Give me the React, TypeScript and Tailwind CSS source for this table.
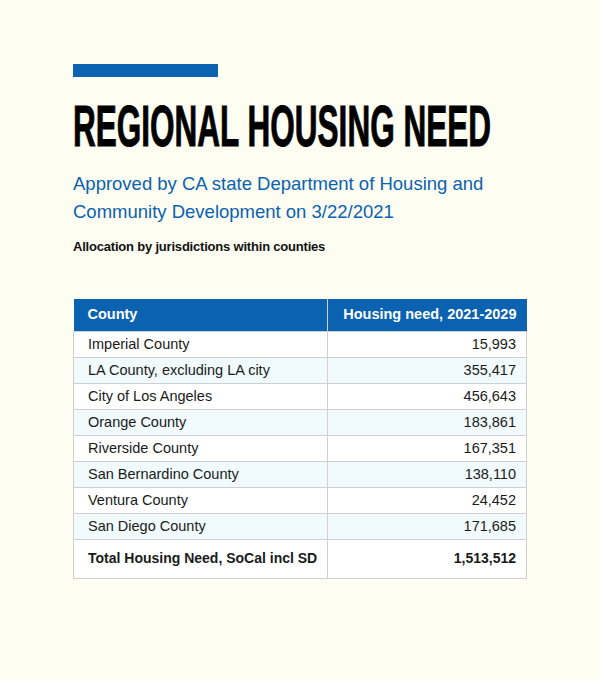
const rows = [
  ["Imperial County", "15,993"],
  ["LA County, excluding LA city", "355,417"],
  ["City of Los Angeles", "456,643"],
  ["Orange County", "183,861"],
  ["Riverside County", "167,351"],
  ["San Bernardino County", "138,110"],
  ["Ventura County", "24,452"],
  ["San Diego County", "171,685"],
];

export default function App() {
  return (
    <div className="w-[600px] h-[680px] bg-[#fdfdf1] px-[73px] pt-[64px] font-['Liberation_Sans',Arial,sans-serif]">
      <div className="w-[145px] h-[13px] bg-[#0a62b0]" />
      <h1 className="mt-[21px] h-[56px] text-[57px] leading-[56px] font-bold text-black whitespace-nowrap origin-left scale-x-[0.553] [-webkit-text-stroke:1px_black]">
        REGIONAL HOUSING NEED
      </h1>
      <p className="mt-[16px] text-[18.5px] leading-[28px] text-[#0a62b0]">
        Approved by CA state Department of Housing and Community Development on 3/22/2021
      </p>
      <p className="mt-[11px] text-[13px] leading-[20px] font-bold tracking-[-0.2px] text-[#111]">
        Allocation by jurisdictions within counties
      </p>
      <table className="mt-[42px] w-[454px] border-collapse text-[14.5px] text-[#1a1a1a]">
        <thead>
          <tr className="bg-[#0a62b0] text-white h-[32px]">
            <th className="text-left font-bold pl-[14px] w-[254px] border-r border-[#d0d0d0]">County</th>
            <th className="text-right font-bold pr-[10px]">Housing need, 2021-2029</th>
          </tr>
        </thead>
        <tbody>
          {rows.map(([name, val], i) => (
            <tr key={name} className={`h-[26px] ${i % 2 === 1 ? "bg-[#f1fafc]" : "bg-white"}`}>
              <td className="pl-[14px] pt-[1px] border border-[#d0d0d0]">{name}</td>
              <td className="text-right pr-[10px] pt-[1px] border border-[#d0d0d0]">{val}</td>
            </tr>
          ))}
          <tr className="h-[39px] bg-white font-bold text-[14px]">
            <td className="pl-[14px] border border-[#d0d0d0] border-t-black">Total Housing Need, SoCal incl SD</td>
            <td className="text-right pr-[10px] border border-[#d0d0d0] border-t-black">1,513,512</td>
          </tr>
        </tbody>
      </table>
    </div>
  );
}
